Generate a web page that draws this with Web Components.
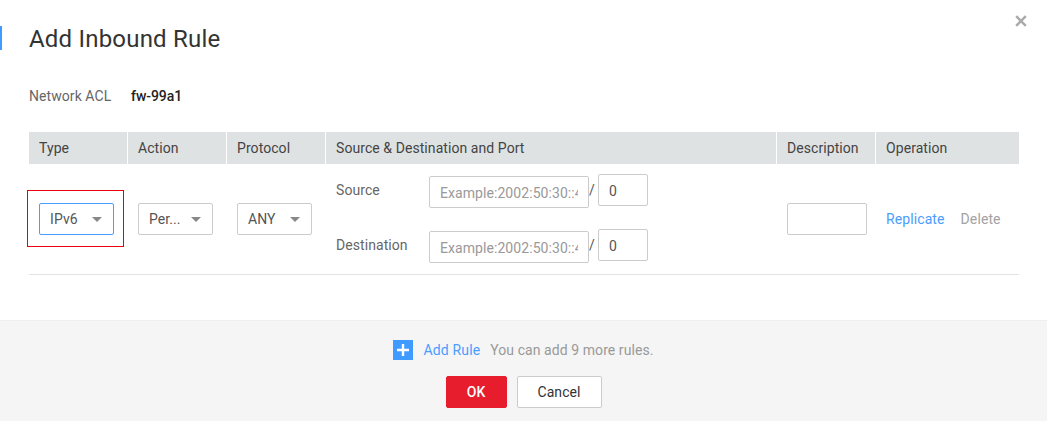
<!DOCTYPE html>
<html>
<head>
<meta charset="utf-8">
<title>Add Inbound Rule</title>
<style>
  html, body { margin: 0; padding: 0; background: #fff; }
  body { width: 1047px; height: 421px; overflow: hidden; font: 14px Roboto, "Liberation Sans", sans-serif; color: #333; letter-spacing: .07px; }
</style>
</head>
<body>
<rule-dialog></rule-dialog>

<script>
// small helper, every component sets its shadow the same way
class Base extends HTMLElement {
  constructor() {
    super();
    this.attachShadow({ mode: 'open' });
    this.shadowRoot.innerHTML = this.markup();
  }
  markup() { return ''; }
}

class UiSelect extends Base {
  markup() {
    return `
      <style>
        :host { display: inline-block; width: 75px; height: 32px; box-sizing: border-box;
                border: 1px solid var(--bd, #ccc); border-radius: 2px; background: #fff; }
        :host([active]) { --bd: #4a9dff; }
        .in { display: flex; align-items: center; height: 100%; padding: 0 10px; }
        .val { flex: 1; font-size: 14px; color: #555; white-space: nowrap; }
        .car { width: 0; height: 0; border-left: 5px solid transparent; border-right: 5px solid transparent;
               border-top: 5px solid #888; margin-right: 1px; }
      </style>
      <div class="in"><span class="val"><slot></slot></span><span class="car"></span></div>`;
  }
}

class UiInput extends Base {
  markup() {
    return `
      <style>
        :host { display: block; box-sizing: border-box; height: 32px; border: 1px solid #ccc; border-radius: 2px;
                background: #fff; padding: 0 10px; overflow: hidden; }
        .t { display: block; line-height: 33px; overflow: hidden; white-space: nowrap; font-size: 14px; color: #555; }
        :host([placeholder]) .t { color: #999; }
      </style>
      <span class="t"><slot></slot></span>`;
  }
}

class UiButton extends Base {
  markup() {
    return `
      <style>
        :host { display: inline-flex; align-items: center; justify-content: center; box-sizing: border-box;
                height: 32px; border: 1px solid #ccc; border-radius: 2px; background: #fff; color: #333; font-size: 14px; }
        :host([primary]) { background: #e71c2d; border-color: #e71c2d; color: #fff; font-weight: 500; }
      </style>
      <slot></slot>`;
  }
}

class AddressRow extends Base {
  markup() {
    return `
      <style>
        :host { display: grid; grid-template-columns: 93px 160px 9px 50px; align-items: start; height: 32px; }
        .lbl { color: #666; font-size: 14px; line-height: 16px; margin-top: 8px; }
        .ip { margin-top: 2px; }
        .sl { color: #555; font-size: 14px; margin: 8px 0 0 0; line-height: 16px; }
      </style>
      <span class="lbl"><slot></slot></span>
      <ui-input class="ip" placeholder>Example:2002:50:30::4</ui-input>
      <span class="sl">/</span>
      <ui-input>0</ui-input>`;
  }
}

class RuleTable extends Base {
  markup() {
    return `
      <style>
        :host { display: block; margin: 0 28px 0 29px; }
        .grid { display: grid; grid-template-columns: 98px 98px 98px 450px 98px 143px; column-gap: 1px; }
        .th { height: 32px; line-height: 32px; background: #dfe2e3; padding-left: 10px; font-size: 14px; color: #444; }
        .row { grid-column: 1 / -1; display: grid; grid-template-columns: subgrid; height: 110px;
               border-bottom: 1px solid #e3e3e3; align-items: center; }
        .td { padding-left: 10px; position: relative; }
        .td.first { display: flex; }
        .mark { position: absolute; left: -2px; top: -13px; width: 97px; height: 57px; box-sizing: border-box;
                border: 1px solid #e8000c; pointer-events: none; }
        .addr { display: flex; flex-direction: column; gap: 23px; margin-top: -4px; }
        .ops { display: flex; gap: 16px; padding-left: 10px; font-size: 14px; letter-spacing: .1px; }
        .link { color: #4a9dff; }
        .off { color: #a3a3a3; }
      </style>
      <div class="grid">
        <div class="th">Type</div><div class="th">Action</div><div class="th">Protocol</div>
        <div class="th">Source &amp; Destination and Port</div><div class="th">Description</div><div class="th">Operation</div>
        <div class="row">
          <div class="td first"><ui-select active>IPv6</ui-select><div class="mark"></div></div>
          <div class="td"><ui-select>Per...</ui-select></div>
          <div class="td"><ui-select>ANY</ui-select></div>
          <div class="td addr"><address-row>Source</address-row><address-row>Destination</address-row></div>
          <div class="td"><ui-input style="width:80px"></ui-input></div>
          <div class="ops"><span class="link">Replicate</span><span class="off">Delete</span></div>
        </div>
      </div>`;
  }
}

class RuleDialog extends Base {
  markup() {
    return `
      <style>
        :host { display: flex; flex-direction: column; width: 1047px; height: 421px; background: #fff; position: relative; }
        .head { padding: 26px 0 0 0; display: flex; height: 24px; }
        .bar { width: 2px; height: 24px; background: #3f9bff; }
        h1 { margin: 1px 0 0 27px; font: 400 24px/24px Roboto, "Liberation Sans", sans-serif; letter-spacing: .2px; color: #333; }
        .close { position: absolute; left: 1015px; top: 15px; width: 12px; height: 12px; }
        .meta { display: flex; margin: 38px 0 0 29px; height: 16px; line-height: 16px; font-size: 14px; }
        .meta .k { width: 102px; color: #666; }
        .meta .v { font-weight: 500; letter-spacing: -.05px; color: #222; }
        rule-table { margin-top: 28px; }
        .foot { margin-top: 45px; flex: 1; background: #f5f5f5; border-top: 1px solid #eee; display: flex;
                flex-direction: column; align-items: center; }
        .add { display: flex; align-items: center; height: 20px; margin-top: 19px; font-size: 14px; }
        .add svg { display: block; margin-right: 10px; }
        .add .link { color: #4a9dff; margin-right: 10px; letter-spacing: .15px; }
        .add .hint { color: #999; }
        .btns { display: flex; gap: 10px; margin-top: 16px; }
        .ok { width: 61px; }
        .cancel { width: 85px; }
      </style>
      <div class="head"><div class="bar"></div><h1>Add Inbound Rule</h1></div>
      <svg class="close" viewBox="0 0 12 12"><path d="M1.2 1.2 L10.8 10.8 M10.8 1.2 L1.2 10.8" stroke="#aaa" stroke-width="2.4" fill="none"/></svg>
      <div class="meta"><span class="k">Network ACL</span><span class="v">fw-99a1</span></div>
      <rule-table></rule-table>
      <div class="foot">
        <div class="add">
          <svg width="20" height="20" viewBox="0 0 20 20"><rect width="20" height="20" fill="#3f9bff"/><path d="M10 4 V16 M4 10 H16" stroke="#fff" stroke-width="2.4"/></svg>
          <span class="link">Add Rule</span><span class="hint">You can add 9 more rules.</span>
        </div>
        <div class="btns"><ui-button class="ok" primary>OK</ui-button><ui-button class="cancel">Cancel</ui-button></div>
      </div>`;
  }
}

// children first so the parents upgrade with everything ready
customElements.define('ui-select', UiSelect);
customElements.define('ui-input', UiInput);
customElements.define('ui-button', UiButton);
customElements.define('address-row', AddressRow);
customElements.define('rule-table', RuleTable);
customElements.define('rule-dialog', RuleDialog);
</script>
</body>
</html>
